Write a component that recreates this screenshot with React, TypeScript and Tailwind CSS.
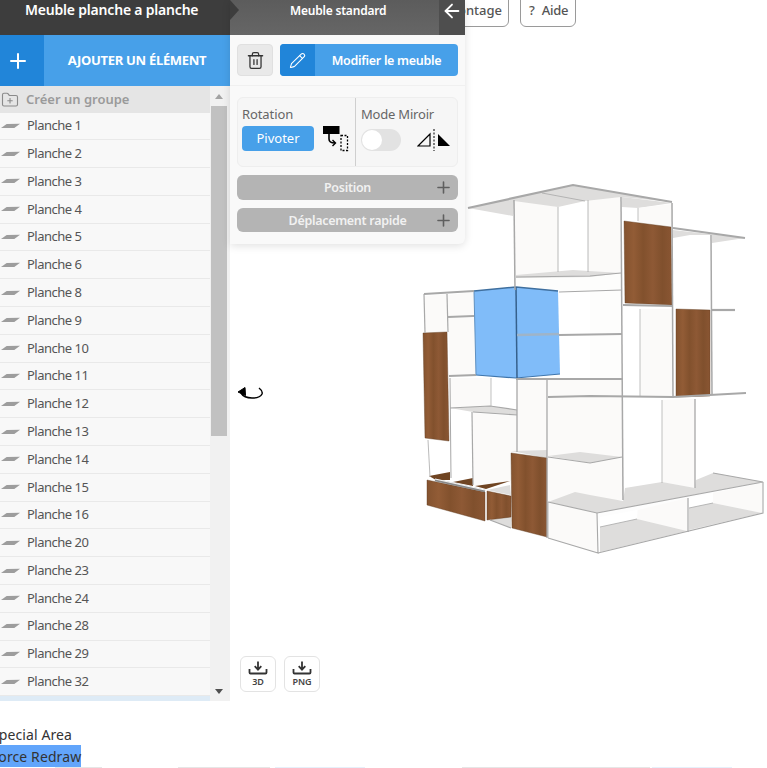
import { ArrowLeft, FolderPlus, Pencil, Plus, Trash2 } from "lucide-react";

const planches = [1, 2, 3, 4, 5, 6, 8, 9, 10, 11, 12, 13, 14, 15, 16, 20, 23, 24, 28, 29, 32];

const OFF = "#fbfaf9";
const GREY = "#dedddc";
const EDGE = "#a8a8a8";

// faces du meuble : [points, fill]
const faces: [string, string][] = [
  // tour haute
  ["514,200 558,207 558,272 515,277", OFF],
  ["558,207 588,200 588,272 558,272", "#ffffff"],
  ["588,200 621,197 621,300 588,300", OFF],
  ["516,278 621,273 621,400 516,380", "#fdfdfc"],
  ["558,291 590,292 590,380 560,378", "#ffffff"],
  // dessus
  ["468,208 573,185 672,202 621,197 585,201 558,207 514,201 513,216", GREY],
  ["622,197 672,203 638,208 622,207", GREY],
  ["638,208 672,204 672,227 638,222", OFF],
  // tour droite
  ["673,230 745,238 712,243 712,235 690,235 673,238", GREY],
  ["677,238 710,235 710,307 677,307", "#ffffff"],
  // tour gauche
  ["425,296 447,294 447,332 425,332", OFF],
  ["448,295 474,292 474,316 448,317", OFF],
  ["448,318 474,318 476,375 450,375", OFF],
  // bas
  ["450,378 491,378 491,406 450,408", OFF],
  ["491,378 517,378 517,410 491,406", "#ffffff"],
  ["450,408 472,412 472,480 450,480", "#ffffff"],
  ["473,413 517,416 517,480 473,486", OFF],
  ["428,440 449,442 450,472 429,476", "#ffffff"],
  ["517,378 547,378 547,456 517,452", OFF],
  ["548,378 623,380 623,500 548,502", OFF],
  ["623,398 662,400 662,483 625,488", "#ffffff"],
  ["662,400 695,399 695,488 662,482", OFF],
  ["623,305 672,306 672,398 623,398", "#ffffff"],
  ["640,309 672,309 672,397 640,397", OFF],
  // étagères
  ["548,456 580,452 622,457 590,463", GREY],
  ["450,408 490,406 517,410 517,415 473,412", GREY],
  ["516,275 573,270 621,273 590,277 516,278", GREY],
  ["511,451 547,450 547,458", GREY],
  // socle
  ["590,495 623,501 625,488 662,482 695,488 696,480 713,473 763,482 597,513 548,502 575,492", GREY],
  ["548,502 597,513 598,553 548,538", OFF],
  ["597,513 763,482 763,513 598,553", "#fdfdfd"],
  ["600,517 637,510 637,519 600,527", "#ffffff"],
  ["638,510 687,498 687,531 637,519", OFF],
  ["600,527 637,519 687,531 600,552", GREY],
  ["689,498 713,493 713,503 689,508", "#ffffff"],
  ["713,493 762,483 762,513 713,503", OFF],
  ["689,508 713,503 762,513 689,530", GREY],
  // fond du tiroir
  ["429,476 450,472 450,480 436,480", "#6f4422"],
  ["453,482 473,478 473,486", "#6f4422"],
  ["475,486 510,481 486,489", "#6f4422"],
  ["487,490 510,485 511,495", GREY],
  ["490,520 511,516 511,528", GREY],
];

const woods = [
  "624,221 671,227 672,305 625,303",
  "676,309 710,310 710,396 676,397",
  "423,333 447,332 449,441 425,438",
  "427,480 485,492 485,521 427,505",
  "487,491 511,496 511,517 487,520",
  "511,453 547,458 547,537 512,528",
];

const lines: [string, number][] = [
  // montants
  ["514,200 515,290", 1.5],
  ["558,207 558,272", 0.8],
  ["588,200 588,272", 0.8],
  ["621,197 623,500", 1.5],
  ["672,203 673,398", 1.5],
  ["711,235 712,395", 1.5],
  ["640,309 640,397", 0.7],
  ["638,208 638,221", 0.7],
  ["424,294 425,333", 1.2],
  ["447,294 448,332", 1.2],
  ["450,378 451,478", 1],
  ["472,412 473,485", 1.2],
  ["491,378 491,406", 0.7],
  ["517,378 517,452", 1.3],
  ["547,378 547,538", 1.3],
  ["428,440 430,477", 0.8],
  ["662,400 662,483", 0.7],
  ["695,399 695,488", 1.3],
  // dessus et étagères
  ["468,208 573,185 672,202", 2.2],
  ["542,193 585,201", 0.8],
  ["673,228 745,238", 2.2],
  ["712,310 735,310", 2.2],
  ["623,305 672,306", 2.2],
  ["424,294 474,291", 2.2],
  ["559,292 622,290", 1.2],
  ["559,335 622,334", 2.2],
  ["449,376 476,375", 1.8],
  ["516,379 623,379", 1.8],
  ["548,397 590,396 673,397 746,393", 2.2],
  ["448,317 474,316", 2.2],
  ["450,408 490,406 517,410", 1.2],
  ["473,412 517,415", 1.2],
  ["516,277 590,276 621,273", 1.2],
  ["548,457 590,463 622,457", 1.2],
  // socle
  ["548,502 597,513 763,482 713,473", 1.1],
  ["598,553 763,513 763,482", 1.1],
  ["548,538 598,553 597,513", 1.1],
  ["548,502 548,538", 0.8],
  ["688,498 688,532", 1.2],
  ["490,520 511,528", 1.2],
  ["600,527 637,519", 0.8],
  ["689,508 713,503", 0.8],
];

function Furniture() {
  return (
    <svg viewBox="0 0 767 768" className="absolute left-[-230px] top-0 h-[768px] w-[767px]">
      <defs>
        <linearGradient id="wood" x1="0" y1="0" x2="1" y2="0">
          <stop offset="0" stopColor="#84532f" />
          <stop offset="0.2" stopColor="#925c36" />
          <stop offset="0.4" stopColor="#82512d" />
          <stop offset="0.6" stopColor="#8e5935" />
          <stop offset="0.8" stopColor="#80502d" />
          <stop offset="1" stopColor="#8a5633" />
        </linearGradient>
      </defs>
      {faces.map(([points, fill], i) => (
        <polygon key={i} points={points} fill={fill} />
      ))}
      {/* panneau sélectionné */}
      <polygon points="474,291 516,287 558,291 560,374 516,378 476,375" fill="#80bcf9" />
      <polyline points="474,291 516,287 558,291" fill="none" stroke="#3f6f9e" strokeWidth="1.5" />
      <polyline points="476,375 516,378 560,374" fill="none" stroke="#3f76ad" strokeWidth="1.2" />
      <line x1="516" y1="287" x2="517" y2="378" stroke="#35608c" strokeWidth="1.5" />
      <line x1="474" y1="291" x2="476" y2="375" stroke="#5f90c0" strokeWidth="1" />
      {woods.map((points, i) => (
        <polygon key={i} points={points} fill="url(#wood)" stroke="#5d3a1e" strokeWidth="0.4" />
      ))}
      {lines.map(([points, width], i) => (
        <polyline key={i} points={points} fill="none" stroke={EDGE} strokeWidth={width} />
      ))}
      <line x1="517" y1="335" x2="559" y2="334" stroke="#9fb4c8" strokeWidth="2.5" />
      {/* poignée du tiroir */}
      <line x1="435" y1="480" x2="485" y2="491" stroke="#8a8a8a" strokeWidth="2.5" />
      <line x1="435" y1="479" x2="485" y2="490" stroke="#f4f4f4" strokeWidth="1.2" />
    </svg>
  );
}

function SaveButton({ label }: { label: string }) {
  return (
    <div className="flex h-9 w-9 flex-col items-center justify-center rounded-md border border-[#e3e3e3] bg-white">
      <svg viewBox="0 0 20 14" className="h-[14px] w-5" fill="none" stroke="#333" strokeWidth="1.8">
        <path d="M10 0.5V8M6.7 5.2 10 8.6l3.3-3.4" />
        <path d="M1.5 8v3.5q0 1 1 1h15q1 0 1-1V8" />
      </svg>
      <span className="mt-[1px] text-[9px] font-semibold leading-[11px] text-[#444]">{label}</span>
    </div>
  );
}

function GreyBar({ label, className }: { label: string; className: string }) {
  return (
    <div className={`relative flex items-center justify-center rounded-md bg-[#b4b4b4] pt-[2px] text-[12.5px] font-semibold tracking-[-0.3px] text-[#f1f1f1] ${className}`}>
      {label}
      <Plus size={19} strokeWidth={2} className="absolute right-[5px] top-[3px] text-[#5f5f5f]" />
    </div>
  );
}

function SidePanel() {
  return (
    <div className="absolute left-0 top-0 z-10 w-[235px] rounded-br-md bg-[#f9f9f9] shadow-[0_2px_8px_rgba(0,0,0,0.12)]">
      <div className="relative h-[35px] bg-gradient-to-b from-[#5c5c5c] to-[#666666]">
        <div className="absolute left-0 top-0 h-0 w-0 border-y-[10px] border-l-[9px] border-y-transparent border-l-[#3d3d3d]" />
        <div className="pl-[60px] pt-[2px] text-[12px] font-semibold leading-[17px] tracking-[-0.2px] text-white">Meuble standard</div>
        <div className="absolute right-0 top-0 flex h-[35px] w-[26px] items-start justify-center bg-[#4e4e4e]">
          <ArrowLeft size={22} strokeWidth={2} className="text-white" />
        </div>
      </div>
      <div className="flex h-[51px] gap-[7px] border-b border-[#f0f0f0] px-[7px] pt-[9px]">
        <div className="flex h-8 w-9 items-center justify-center rounded-[4px] border border-[#e0e0e0] bg-[#e9e9e9]">
          <Trash2 size={19} strokeWidth={1.6} className="text-[#333]" />
        </div>
        <div className="flex h-8 w-[178px] overflow-hidden rounded-[4px] bg-[#47a0e9] text-white">
          <div className="flex w-[35px] items-center justify-center bg-[#2185d9]">
            <Pencil size={17} strokeWidth={1.5} />
          </div>
          <div className="flex flex-1 items-center justify-center pt-[2px] text-[12.5px] font-semibold tracking-[-0.3px]">Modifier le meuble</div>
        </div>
      </div>
      <div className="px-[7px] pb-3 pt-[11px]">
        <div className="flex h-[70px] rounded-md border border-[#eeeeee] bg-[#f6f6f6]">
          <div className="w-[118px] border-r border-[#cfcfcf] pl-1 pt-[8px]">
            <div className="text-[13px] leading-[17px] tracking-[-0.1px] text-[#666]">Rotation</div>
            <div className="mt-[3px] flex items-start gap-[9px]">
              <div className="flex h-[25px] w-[72px] items-center justify-center rounded-[4px] bg-[#47a0e9] text-[13px] text-white">Pivoter</div>
              <svg viewBox="0 0 26 26" className="h-[26px] w-[26px]" fill="none" stroke="#000">
                <rect x="0" y="0.5" width="16" height="7" fill="#000" />
                <path d="M6 8v5q0 4 6 4" strokeWidth="1.6" />
                <path d="M9.5 14l3 3-3 3" strokeWidth="1.4" />
                <rect x="18" y="9.5" width="6.5" height="15" strokeDasharray="2 1.5" strokeWidth="1.3" />
              </svg>
            </div>
          </div>
          <div className="flex-1 pl-[5px] pt-[8px]">
            <div className="text-[13px] leading-[17px] tracking-[-0.2px] text-[#666]">Mode Miroir</div>
            <div className="mt-[5px] flex items-center gap-4">
              <div className="flex h-[22px] w-10 items-center rounded-full bg-[#e2e2e2] pl-[1px]">
                <div className="h-5 w-5 rounded-full bg-white" />
              </div>
              <svg viewBox="0 0 34 24" className="h-6 w-[34px]">
                <polygon points="1,18 13,6 13,18" fill="none" stroke="#000" strokeWidth="1.2" />
                <line x1="17" y1="1" x2="17" y2="23" stroke="#000" strokeWidth="1" strokeDasharray="2 1.5" />
                <polygon points="21,6 21,18 33,18" fill="#000" />
              </svg>
            </div>
          </div>
        </div>
        <GreyBar label="Position" className="mt-2 h-[25px]" />
        <GreyBar label="Déplacement rapide" className="mt-2 h-6" />
      </div>
    </div>
  );
}

function ElementList() {
  return (
    <div className="flex h-[615px] overflow-hidden">
      <div className="w-[210px] shrink-0 bg-[#f8f8f8]">
        <div className="flex h-[26.5px] items-center gap-[7px] bg-[#e5e5e5] pl-[1px] pt-px text-[13px] font-semibold text-[#9a9a9a]">
          <FolderPlus size={18} strokeWidth={1.5} className="text-[#8a8a8a]" />
          Créer un groupe
        </div>
        {planches.map((n) => (
          <div key={n} className="flex h-[27.8px] items-center gap-[7px] border-b border-[#e9e9e9] pl-[1px] text-[13px] tracking-[-0.5px] text-[#555]">
            <svg viewBox="0 0 20 6" className="h-[6px] w-[19px] shrink-0">
              <polygon points="0,5 6,1 20,0.5 14,5" fill="#9d9d9d" />
            </svg>
            Planche {n}
          </div>
        ))}
        <div className="h-7 bg-[#deebf6] pl-[2px] pt-[5px]">
          <div className="h-4 w-4 rounded-[3px] bg-[#47a0e9]" />
        </div>
      </div>
      <div className="relative w-5 shrink-0 bg-[#f1f1f1]">
        <div className="absolute left-[5px] top-[8px] h-0 w-0 border-x-[4px] border-b-[5px] border-x-transparent border-b-[#a3a3a3]" />
        <div className="ml-[1px] mt-5 h-[330px] w-4 bg-[#c1c1c1]" />
        <div className="absolute bottom-[7px] left-[5px] h-0 w-0 border-x-[4px] border-t-[5px] border-x-transparent border-t-[#505050]" />
      </div>
    </div>
  );
}

export default function App() {
  return (
    <div className="h-[768px] w-[767px] overflow-hidden bg-white font-['Noto_Sans',sans-serif]">
      <div className="flex h-[701px]">
        <div className="w-[230px] shrink-0">
          <div className="h-[35px] bg-[#3d3d3d] pl-[25px] text-[14px] font-semibold leading-[19px] tracking-[-0.2px] text-white">Meuble planche a planche</div>
          <div className="flex h-[51px] bg-[#47a0e9] text-white">
            <div className="flex w-11 items-center justify-center bg-[#2185d9] pr-[8px]">
              <Plus size={24} strokeWidth={2} />
            </div>
            <div className="flex flex-1 items-center justify-center text-[13px] font-bold tracking-[-0.3px]">AJOUTER UN ÉLÉMENT</div>
          </div>
          <ElementList />
        </div>
        <div className="relative flex-1">
          <div className="absolute left-[170px] top-[-8px] flex h-[35px] w-[109px] items-center justify-end rounded-md border border-[#9a9a9a] pr-[6px] pt-[2px] text-[13px] font-medium text-[#555]">
            Montage
          </div>
          <div className="absolute left-[290px] top-[-8px] flex h-[35px] w-[56px] items-center gap-[7px] rounded-md border border-[#9a9a9a] pl-[8px] pt-[2px] text-[13px] font-medium tracking-[-0.2px] text-[#555]">
            <span>?</span>
            <span>Aide</span>
          </div>
          <Furniture />
          <SidePanel />
          <svg viewBox="0 0 28 16" className="absolute left-[7px] top-[385px] h-4 w-7" fill="none" stroke="#000">
            <path d="M22 3q4 3 3 6-2 4-10 4-8 0-11-5" strokeWidth="1.5" />
            <path d="M1 7l7-4.5.5 8z" fill="#000" />
          </svg>
          <div className="absolute left-[10px] top-[656px] flex gap-2">
            <SaveButton label="3D" />
            <SaveButton label="PNG" />
          </div>
        </div>
      </div>
      <div className="ml-[-9px] pt-[22px] text-[14px] leading-[24px] tracking-[0.1px] text-[#333]">
        <div className="h-[22px]">Special Area</div>
        <div className="h-[22px]">
          <span className="inline-block h-[22px] bg-[#62a5fb]">Force Redraw</span>
        </div>
      </div>
      <div className="flex h-px">
        <div className="ml-[55px] w-[47px] bg-[#e6e6e6]" />
        <div className="ml-[76px] w-[92px] bg-[#e6e6e6]" />
        <div className="ml-[5px] w-[90px] bg-[#e6f0fa]" />
        <div className="ml-[97px] w-[188px] bg-[#e6e6e6]" />
        <div className="ml-[2px] w-20 bg-[#e6f0fa]" />
      </div>
    </div>
  );
}
